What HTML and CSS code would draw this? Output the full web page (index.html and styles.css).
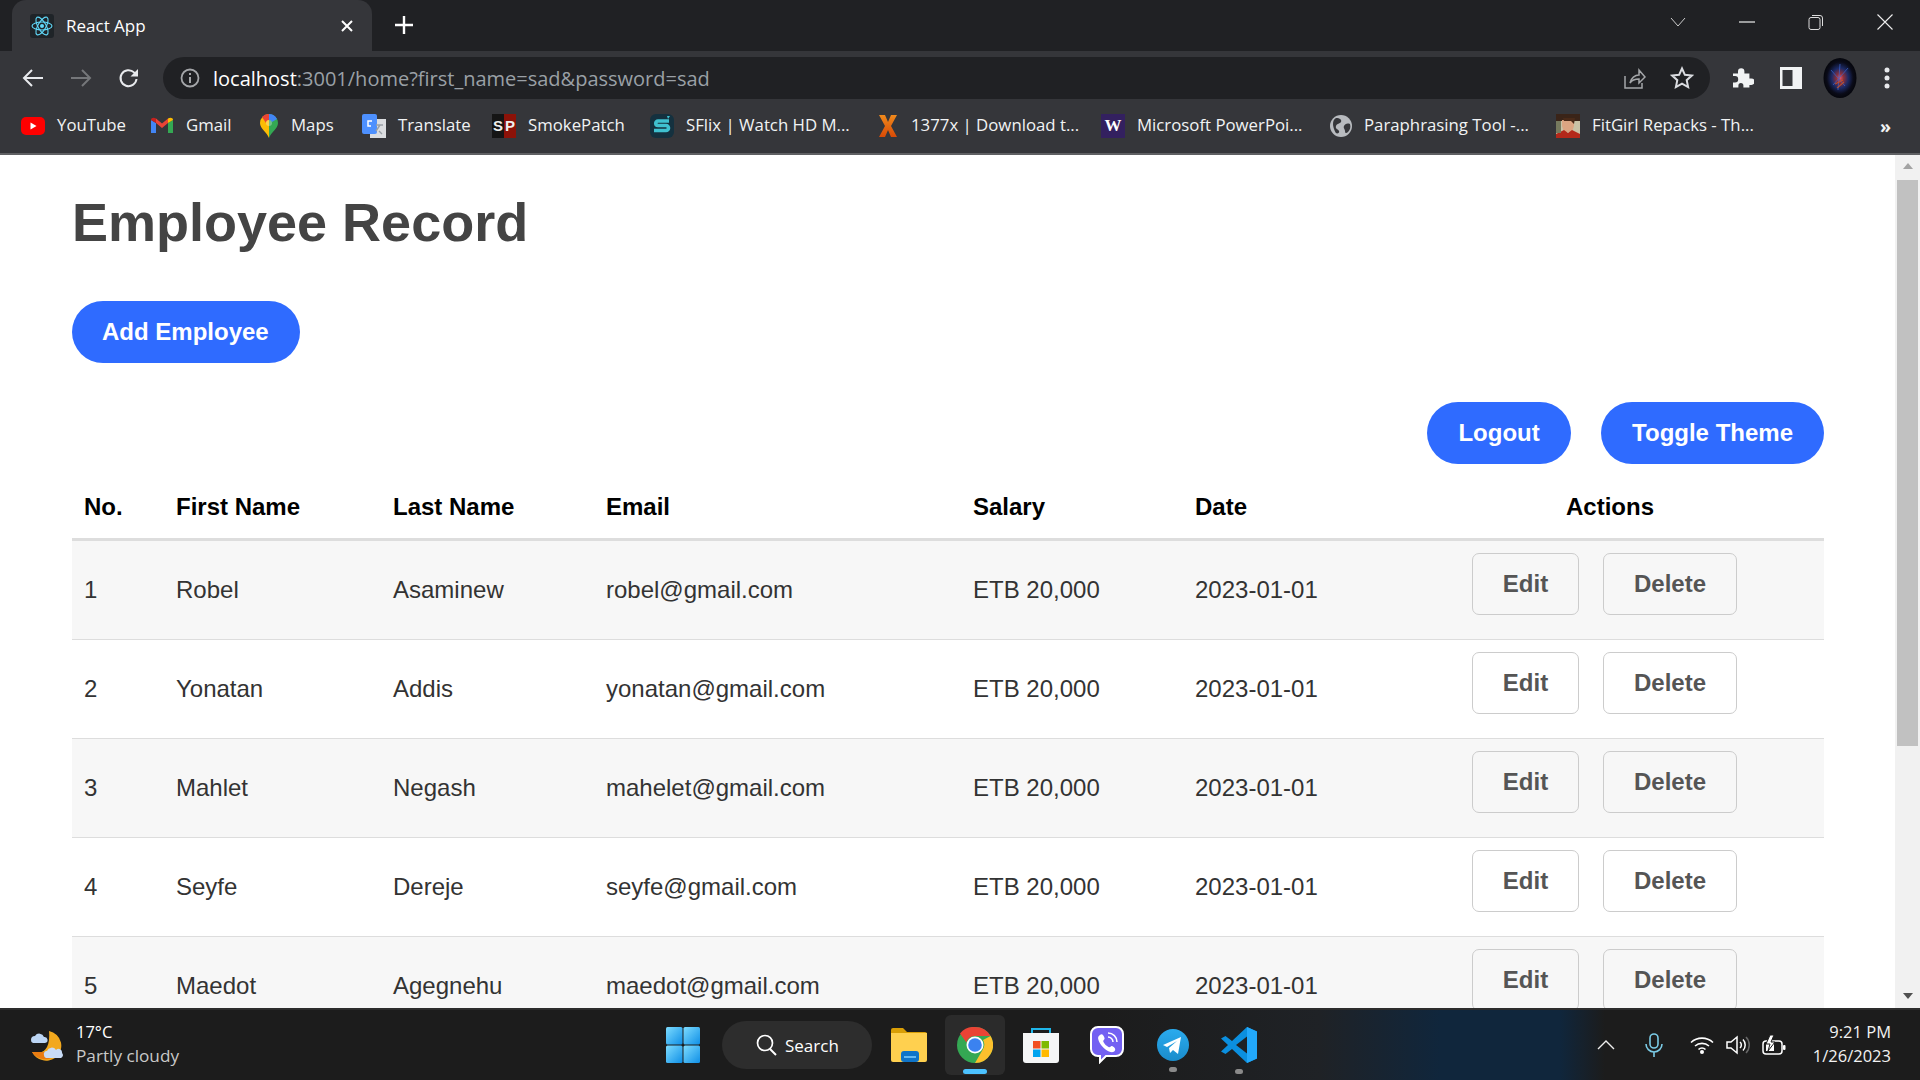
FILE: index.html
```html
<!DOCTYPE html>
<html lang="en">
<head>
<meta charset="utf-8">
<title>React App</title>
<link rel="stylesheet" href="styles.css">
</head>
<body>
<div class="browser">
  <header class="tabstrip">
    <div class="tab">
      <span class="favicon">
        <svg viewBox="0 0 24 24" width="24" height="24"><g fill="none" stroke="#61dafb" stroke-width="1.1"><ellipse cx="12" cy="12" rx="10" ry="4"/><ellipse cx="12" cy="12" rx="10" ry="4" transform="rotate(60 12 12)"/><ellipse cx="12" cy="12" rx="10" ry="4" transform="rotate(120 12 12)"/></g><circle cx="12" cy="12" r="2" fill="#61dafb"/></svg>
      </span>
      <span class="tab-title">React App</span>
      <svg class="tab-close" viewBox="0 0 14 14" width="14" height="14"><path d="M2 2l10 10M12 2L2 12" stroke="#fff" stroke-width="2"/></svg>
    </div>
    <svg class="new-tab" viewBox="0 0 18 18" width="18" height="18"><path d="M9 0v18M0 9h18" stroke="#fff" stroke-width="2.4"/></svg>
    <div class="winctl">
      <svg viewBox="0 0 16 10" width="16" height="10"><path d="M1 1l7 8 7-8" fill="none" stroke="#ccc" stroke-width="1"/></svg>
      <svg viewBox="0 0 16 16" width="16" height="16"><path d="M0 8h16" stroke="#eee" stroke-width="1.2"/></svg>
      <svg viewBox="0 0 16 16" width="16" height="16"><path d="M4 1.5h8a2.5 2.5 0 0 1 2.5 2.5v8" fill="none" stroke="#ddd" stroke-width="1"/><rect x="1" y="3.5" width="11" height="12" rx="2" fill="none" stroke="#ddd" stroke-width="1"/></svg>
      <svg viewBox="0 0 16 16" width="16" height="16"><path d="M.5.5l15 15M15.5.5l-15 15" stroke="#eee" stroke-width="1.1"/></svg>
    </div>
  </header>

  <div class="toolbar">
    <div class="nav">
      <svg viewBox="0 0 22 20" width="22" height="20"><path d="M21 10H2M10 2l-8 8 8 8" fill="none" stroke="#e8eaed" stroke-width="2"/></svg>
      <svg viewBox="0 0 22 20" width="22" height="20"><path d="M1 10h19M12 2l8 8-8 8" fill="none" stroke="#75777a" stroke-width="2"/></svg>
      <svg viewBox="0 0 22 22" width="22" height="22"><path d="M18.5 12a8 8 0 1 1-2.4-6.6L19 8" fill="none" stroke="#e8eaed" stroke-width="2"/><path d="M20 2v7.5h-7.5z" fill="#e8eaed"/></svg>
    </div>
    <div class="omnibox">
      <svg viewBox="0 0 20 20" width="20" height="20"><circle cx="10" cy="10" r="8.5" fill="none" stroke="#a4a6a9" stroke-width="1.8"/><path d="M10 9v6M10 5v2" stroke="#a4a6a9" stroke-width="2"/></svg>
      <div class="url"><span class="host">localhost</span>:3001/home?first_name=sad&amp;password=sad</div>
      <svg class="omni-share" viewBox="0 0 24 22" width="24" height="22"><path d="M3 9v12h17v-5" fill="none" stroke="#a4a6a9" stroke-width="1.5"/><path d="M8 16c1-5 5-8 9-8V3l6 7-6 6v-4c-4 0-7 1-9 4z" fill="none" stroke="#a4a6a9" stroke-width="1.5"/></svg>
      <svg viewBox="0 0 24 24" width="24" height="24"><path d="M12 2.5l2.9 6.3 6.9.8-5.1 4.6 1.4 6.8-6.1-3.4-6.1 3.4 1.4-6.8-5.1-4.6 6.9-.8z" fill="none" stroke="#dadce0" stroke-width="2"/></svg>
    </div>
    <div class="tools">
      <svg viewBox="0 0 24 24" width="24" height="24"><path d="M3 9h5V7a3.2 3.2 0 0 1 6.4 0v2h5v5h2a3.2 3.2 0 0 1 0 6.400h-2V23h-6v-2a2.500 2.500 0 0 0-5 0v2H3v-5h2a3.200 3.200 0 0 0 0-6.400H3z" fill="#f1f3f4" transform="translate(0 -1.500)"/></svg>
      <svg viewBox="0 0 22 22" width="22" height="22"><rect width="22" height="22" fill="#f1f3f4"/><rect x="2.500" y="3" width="10" height="16" fill="#35363a"/></svg>
      <svg class="avatar" viewBox="0 0 34 40" width="34" height="40"><defs><radialGradient id="ava" cx="50%" cy="50%" r="50%"><stop offset="0" stop-color="#e0566a"/><stop offset=".22" stop-color="#8c2f3a"/><stop offset=".5" stop-color="#1c2a66"/><stop offset=".8" stop-color="#0a0b18"/><stop offset="1" stop-color="#05060c"/></radialGradient></defs><ellipse cx="17" cy="20" rx="16.500" ry="20" fill="url(#ava)"/><path d="M8 12l14 16M25 10L10 27M17 6l-2 26" stroke="#3a62c8" stroke-width="1" opacity=".75"/><path d="M12 26l8-4M14 30l7-6" stroke="#c8552a" stroke-width="1.200" opacity=".8"/></svg>
      <svg class="kebab" viewBox="0 0 6 24" width="6" height="24"><circle cx="3" cy="4" r="2.500" fill="#e8eaed"/><circle cx="3" cy="12" r="2.500" fill="#e8eaed"/><circle cx="3" cy="20" r="2.500" fill="#e8eaed"/></svg>
    </div>
  </div>

  <nav class="bookmarks">
    <a class="bm"><svg viewBox="0 0 24 18" width="24" height="18"><rect width="24" height="18" rx="5" fill="#f00"/><path d="M9.500 5.500v7l6-3.500z" fill="#fff"/></svg><span>YouTube</span></a>
    <a class="bm bm-narrow"><svg viewBox="0 0 22 18" width="22" height="18"><path d="M0 16V3l5 3v10z" fill="#4285f4"/><path d="M22 16V3l-5 3v10z" fill="#34a853"/><path d="M5 6l6 5 6-5V1.500l-6 5-6-5z" fill="#ea4335"/><path d="M0 3l5 3V1.500C3 .2 0 .5 0 3z" fill="#c5221f"/><path d="M22 3l-5 3V1.500c2-1.300 5-1 5 1.500z" fill="#fbbc04"/></svg><span>Gmail</span></a>
    <a class="bm bm-narrow"><svg viewBox="0 0 18 24" width="18" height="24"><path d="M9 0a9 9 0 0 0-9 9c0 6 7 9 9 15z" fill="#fbbc04"/><path d="M9 0a9 9 0 0 1 9 9c0 6-7 9-9 15z" fill="#34a853"/><path d="M2 3a9 9 0 0 1 7-3v6a3 3 0 0 0-3 3z" fill="#ea4335"/><path d="M9 0a9 9 0 0 1 8 5l-5 3a3 3 0 0 0-3-2z" fill="#4285f4"/><circle cx="9" cy="9" r="3" fill="#fff" opacity=".3"/></svg><span>Maps</span></a>
    <a class="bm"><svg viewBox="0 0 24 24" width="24" height="24"><rect x="8" y="5" width="16" height="19" fill="#dbdde0"/><rect width="15" height="20" rx="2" fill="#4d90fe"/><path d="M18 11l-4 6M14 11h7M17 17l3 3" stroke="#9aa0a6" stroke-width="1.400" fill="none"/><path d="M10 7H6v5h3" fill="none" stroke="#fff" stroke-width="1.500"/></svg><span>Translate</span></a>
    <a class="bm"><span class="sp-icon"><b class="sp-s">S</b><b class="sp-p">P</b></span><span>SmokePatch</span></a>
    <a class="bm"><svg viewBox="0 0 24 24" width="24" height="24"><rect width="24" height="24" rx="6" fill="#14313f"/><path d="M19 7H8a2 2 0 0 0 0 4.500h8a2.500 2.500 0 0 1 0 5H4" fill="none" stroke="#3fc1d0" stroke-width="3.600"/><path d="M17 2l3 0-2 3z" fill="#3fc1d0"/></svg><span>SFlix | Watch HD M...</span></a>
    <a class="bm bm-x"><svg viewBox="0 0 18 22" width="18" height="22"><defs><linearGradient id="xg" x1="0" y1="0" x2="0" y2="1"><stop offset="0" stop-color="#f08a1c"/><stop offset="1" stop-color="#d84a06"/></linearGradient></defs><path d="M0 0h6l3 7 3-7h6l-6 11 6 11h-6l-3-7-3 7H0l6-11z" fill="url(#xg)"/></svg><span>1377x | Download t...</span></a>
    <a class="bm"><span class="w-icon">W</span><span>Microsoft PowerPoi...</span></a>
    <a class="bm"><svg viewBox="0 0 22 22" width="22" height="22"><circle cx="11" cy="11" r="11" fill="#b8bbbf"/><path d="M6 3c4 0 6 2 5 4s-4 1-5 4 2 3 3 5-2 3-3 2-3-6-3-9 1-5 3-6zM20 9c-3-1-5 0-6 2s1 3 1 5 1 3 3 1 3-5 2-8z" fill="#35363a"/></svg><span>Paraphrasing Tool -...</span></a>
    <a class="bm"><svg viewBox="0 0 24 24" width="24" height="24"><rect width="24" height="24" fill="#c9c2a6"/><path d="M0 0h24v7H0z" fill="#3a2418"/><path d="M6 6h12v6l-2 6h-8l-2-6z" fill="#dca582"/><path d="M7 4h12l-1 6-3-3H8z" fill="#4a2a18"/><path d="M0 24v-4l8-4 4 3 4-3 8 4v4z" fill="#b3281a"/><path d="M0 7h5v12H0z" fill="#767a5e"/></svg><span>FitGirl Repacks - Th...</span></a>
    <span class="bm-more">»</span>
  </nav>

  <div class="viewport">
    <main class="page">
      <h1 class="title">Employee Record</h1>
      <button class="pill add">Add Employee</button>
      <div class="top-actions">
        <button class="pill logout">Logout</button>
        <button class="pill">Toggle Theme</button>
      </div>
      <table class="records">
        <colgroup>
          <col class="c-no"><col class="c-first"><col class="c-last"><col class="c-email"><col class="c-salary"><col class="c-date"><col class="c-actions">
        </colgroup>
        <thead>
          <tr><th>No.</th><th>First Name</th><th>Last Name</th><th>Email</th><th>Salary</th><th>Date</th><th class="th-actions">Actions</th></tr>
        </thead>
        <tbody>
          <tr><td>1</td><td>Robel</td><td>Asaminew</td><td>robel@gmail.com</td><td>ETB 20,000</td><td>2023-01-01</td><td class="td-actions"><div class="row-btns"><button class="ghost edit">Edit</button><button class="ghost del">Delete</button></div></td></tr>
          <tr><td>2</td><td>Yonatan</td><td>Addis</td><td>yonatan@gmail.com</td><td>ETB 20,000</td><td>2023-01-01</td><td class="td-actions"><div class="row-btns"><button class="ghost edit">Edit</button><button class="ghost del">Delete</button></div></td></tr>
          <tr><td>3</td><td>Mahlet</td><td>Negash</td><td>mahelet@gmail.com</td><td>ETB 20,000</td><td>2023-01-01</td><td class="td-actions"><div class="row-btns"><button class="ghost edit">Edit</button><button class="ghost del">Delete</button></div></td></tr>
          <tr><td>4</td><td>Seyfe</td><td>Dereje</td><td>seyfe@gmail.com</td><td>ETB 20,000</td><td>2023-01-01</td><td class="td-actions"><div class="row-btns"><button class="ghost edit">Edit</button><button class="ghost del">Delete</button></div></td></tr>
          <tr><td>5</td><td>Maedot</td><td>Agegnehu</td><td>maedot@gmail.com</td><td>ETB 20,000</td><td>2023-01-01</td><td class="td-actions"><div class="row-btns"><button class="ghost edit">Edit</button><button class="ghost del">Delete</button></div></td></tr>
        </tbody>
      </table>
    </main>
    <div class="scrollbar">
      <svg viewBox="0 0 10 6" width="10" height="6"><path d="M5 0l5 6H0z" fill="#a3a3a3"/></svg>
      <div class="track"><div class="thumb"></div></div>
      <svg viewBox="0 0 10 6" width="10" height="6"><path d="M5 6l5-6H0z" fill="#505050"/></svg>
    </div>
  </div>

  <footer class="taskbar">
    <div class="weather">
      <svg viewBox="0 0 36 34" width="36" height="34"><path d="M20 3a15 15 0 0 1 6 27A16 16 0 0 1 3 24c8 3 19 0 17-21z" fill="#f2a81d"/><path d="M3 24c5 8 15 9 21 5l-6-5z" fill="#e97c12"/><path d="M2 12a4 4 0 0 1 4-4 5 5 0 0 1 9 1 3 3 0 0 1 1 6H4a3 3 0 0 1-2-3z" fill="#bcd5f4"/><path d="M15 27a3 3 0 0 1 3-4 5 5 0 0 1 9-1 3.500 3.500 0 0 1 6 3 3 3 0 0 1-1 5H17a3 3 0 0 1-2-3z" fill="#c9dcf6"/></svg>
      <div class="two-lines"><div class="t1">17°C</div><div class="t2">Partly cloudy</div></div>
    </div>
    <div class="task-center">
      <svg class="win" viewBox="0 0 34 36" width="34" height="36"><defs><linearGradient id="wg" x1="0" y1="0" x2="1" y2="1"><stop offset="0" stop-color="#7ddcff"/><stop offset="1" stop-color="#0f8fe6"/></linearGradient></defs><rect width="16.500" height="17.500" rx="1.500" fill="url(#wg)"/><rect x="17.500" width="16.500" height="17.500" rx="1.500" fill="url(#wg)"/><rect y="18.500" width="16.500" height="17.500" rx="1.500" fill="url(#wg)"/><rect x="17.500" y="18.500" width="16.500" height="17.500" rx="1.500" fill="url(#wg)"/></svg>
      <div class="search">
        <svg viewBox="0 0 21 22" width="21" height="22"><circle cx="9" cy="9" r="7.500" fill="none" stroke="#fff" stroke-width="1.700"/><path d="M14 15l6 6" stroke="#fff" stroke-width="1.900"/></svg>
        <span>Search</span>
      </div>
      <svg class="files" viewBox="0 0 36 34" width="36" height="34"><path d="M0 2a2 2 0 0 1 2-2h10l4 4h18a2 2 0 0 1 2 2v4H0z" fill="#d99e06"/><path d="M0 5h36v27a2 2 0 0 1-2 2H2a2 2 0 0 1-2-2z" fill="#ffd04f"/><rect x="10" y="23" width="18" height="11" rx="3" fill="#0f74c8"/><rect x="13" y="28" width="12" height="2" fill="#65b8f0"/></svg>
      <div class="task-tile">
        <svg viewBox="0 0 36 36" width="36" height="36"><circle cx="18" cy="18" r="18" fill="#34a853"/><path d="M18 0a18 18 0 0 1 15.600 9H18a9 9 0 0 0-8.600 6.500L3 6.500A18 18 0 0 1 18 0z" fill="#ea4335"/><path d="M33.600 9A18 18 0 0 1 18 36l7.800-13.500A9 9 0 0 0 26 13z" fill="#fbc02d"/><circle cx="18" cy="18" r="8.500" fill="#fff"/><circle cx="18" cy="18" r="6.800" fill="#3b82f0"/></svg>
        <i class="tile-active"></i>
      </div>
      <svg class="store" viewBox="0 0 36 36" width="36" height="36"><path d="M9 7V2h18v5" fill="none" stroke="#1fb6ea" stroke-width="2"/><path d="M0 6h36v27a3 3 0 0 1-3 3H3a3 3 0 0 1-3-3z" fill="#f4f5f6"/><rect x="10" y="14" width="7.500" height="7.500" fill="#f25022"/><rect x="18.500" y="14" width="7.500" height="7.500" fill="#7fba00"/><rect x="10" y="22.500" width="7.500" height="7.500" fill="#00a4ef"/><rect x="18.500" y="22.500" width="7.500" height="7.500" fill="#ffb900"/></svg>
      <svg class="viber" viewBox="0 0 34 38" width="34" height="38"><path d="M8 1h18a7 7 0 0 1 7 7v15a7 7 0 0 1-7 7H16l-6 6v-6H8a7 7 0 0 1-7-7V8a7 7 0 0 1 7-7z" fill="#7360f2" stroke="#fff" stroke-width="2"/><path d="M10 9c2-2 4 1 4.500 3s-2 2-1 4 3 4 5 5 2-1.500 3.500-1 4 2.500 3 4.500-3.500 2-6 1-8-5-10-10 0-5.500 1-6.500z" fill="#fff"/><path d="M18 7a9 9 0 0 1 9 9M18 11a5 5 0 0 1 5 5" fill="none" stroke="#fff" stroke-width="1.500"/></svg>
      <div class="pin">
        <svg viewBox="0 0 32 32" width="32" height="32"><defs><linearGradient id="tg" x1="0" y1="0" x2="0" y2="1"><stop offset="0" stop-color="#2aabee"/><stop offset="1" stop-color="#1a8ccb"/></linearGradient></defs><circle cx="16" cy="16" r="16" fill="url(#tg)"/><path d="M6 16l18-8-3 17-5-4-3 3-1-5 8-7-10 6z" fill="#fff"/></svg>
        <i class="pin-dot"></i>
      </div>
      <div class="pin pin-code">
        <svg viewBox="0 0 36 36" width="36" height="36"><path d="M26 0l10 4.500v27L26 36 11 22l-6.500 5L0 24.500 7 18 0 11.500 4.500 9 11 14z" fill="#0b8fdf"/><path d="M26 0l10 4.500v27L26 36z" fill="#22a8fa"/><path d="M26 9.500v17L15 18z" fill="#1e2124"/></svg>
        <i class="pin-dot"></i>
      </div>
    </div>
    <div class="tray">
      <svg viewBox="0 0 18 10" width="18" height="10"><path d="M1 9l8-8 8 8" fill="none" stroke="#eee" stroke-width="1.400"/></svg>
      <svg class="mic" viewBox="0 0 18 24" width="18" height="24"><rect x="5" y="1" width="8" height="14" rx="4" fill="none" stroke="#7bcbe6" stroke-width="1.600"/><path d="M1 11a8 8 0 0 0 16 0M9 19v5" fill="none" stroke="#7bcbe6" stroke-width="1.600"/></svg>
      <svg class="wifi" viewBox="0 0 24 18" width="24" height="18"><path d="M1 6.500a16 16 0 0 1 22 0M5 10a10.500 10.500 0 0 1 14 0M8.500 13.500a5 5 0 0 1 7 0" fill="none" stroke="#fff" stroke-width="1.600"/><circle cx="12" cy="16" r="2" fill="#fff"/></svg>
      <svg class="vol" viewBox="0 0 24 20" width="24" height="20"><path d="M1 7h4l6-5v16l-6-5H1z" fill="none" stroke="#fff" stroke-width="1.500"/><path d="M14 7a4 4 0 0 1 0 6M17 4.500a8 8 0 0 1 0 11" fill="none" stroke="#fff" stroke-width="1.500"/><path d="M20 2a11.500 11.500 0 0 1 0 16" fill="none" stroke="#666" stroke-width="1.500"/></svg>
      <svg class="batt" viewBox="0 0 24 21" width="24" height="21"><rect x="1" y="6" width="19" height="13" rx="3" fill="none" stroke="#fff" stroke-width="1.500"/><rect x="21" y="10" width="2.500" height="5" rx="1" fill="#fff"/><rect x="4" y="9" width="8" height="7" fill="#fff"/><path d="M8 0L4 9h4l-2 7 7-9H9l3-7z" fill="#fff" stroke="#1c1c1c" stroke-width="1"/></svg>
      <div class="two-lines clock"><div>9:21 PM</div><div>1/26/2023</div></div>
    </div>
  </footer>
</div>
</body>
</html>
```
FILE: styles.css
```css
* { box-sizing: border-box; }
html, body { margin: 0; height: 100%; overflow: hidden; }
body { font-family: "Liberation Sans", Arial, sans-serif; background: #fff; }
svg { display: block; flex: none; }
.browser { width: 1920px; height: 1080px; display: flex; flex-direction: column; overflow: hidden; }

/* tab strip */
.tabstrip { height: 51px; flex: none; background: #202124; display: flex; align-items: stretch; padding-left: 12px; }
.tab { width: 360px; background: #35363a; border-radius: 14px 14px 0 0; display: flex; align-items: center; padding: 0 18px; color: #fff; }
.favicon { width: 24px; height: 24px; background: #1f2428; border-radius: 3px; flex: none; }
.tab-title { font: 400 17px "Open Sans", sans-serif; margin-left: 12px; flex: 1; }
.new-tab { margin: 16px 0 0 23px; }
.winctl { margin-left: auto; display: flex; align-items: center; gap: 53px; padding-right: 27px; padding-bottom: 8px; }

/* toolbar */
.toolbar { height: 48px; flex: none; background: #35363a; display: flex; align-items: flex-start; padding-top: 6px; }
.nav { width: 163px; height: 42px; display: flex; align-items: center; gap: 26px; padding-left: 22px; flex: none; }
.omnibox { width: 1547px; height: 42px; background: #202124; border-radius: 21px; display: flex; align-items: center; padding: 0 16px 0 17px; gap: 13px; flex: none; }
.url { flex: 1; font: 400 20px "Open Sans", sans-serif; color: #9aa0a6; white-space: nowrap; }
.host { color: #fff; }
.omni-share { margin-right: 11px; }
.tools { flex: 1; display: flex; align-items: center; height: 42px; padding-left: 20px; gap: 25px; }
.tools svg:nth-child(2) { margin-left: 1px; }
.avatar { margin-left: -4px; }
.kebab { margin-left: 2px; }

/* bookmarks */
.bookmarks { height: 54px; flex: none; background: #35363a; display: grid; grid-template-columns: 130px 109px 102px 130px 158px 229px 222px 229px 226px 324px 1fr; align-items: center; padding-left: 21px; }
.bm { display: flex; align-items: center; gap: 12px; color: #f1f3f4; font: 400 16.800px/22px "Open Sans", sans-serif; white-space: nowrap; }
.bm > span:last-child { position: relative; top: -1.500px; }
.bm-narrow { gap: 13px; }
.bm-x { gap: 14px; }
.sp-icon { width: 24px; height: 24px; display: flex; font: 700 15px/24px "Liberation Sans", sans-serif; flex: none; }
.sp-s { width: 12px; background: #151515; color: #eee; text-align: center; }
.sp-p { width: 12px; background: #8c1208; color: #eee; text-align: center; }
.w-icon { width: 24px; height: 24px; background: #33205f; color: #fff; font: 700 17px/24px "Liberation Serif", serif; text-align: center; flex: none; }
.bm-more { color: #f1f3f4; font: 700 18px "Open Sans", sans-serif; }

/* page */
.viewport { flex: 1; min-height: 0; display: flex; border-top: 2px solid #5f6063; background: #fff; overflow: hidden; }
.page { flex: 1; min-width: 0; padding: 36px 71px 0 72px; overflow: hidden; }
.title { margin: 0 0 48px; font-size: 54px; line-height: 62px; font-weight: 700; color: #444; }
.pill { display: block; height: 62px; border: 0; border-radius: 31px; background: #2f6bff; color: #fff; font: 700 24px "Liberation Sans", sans-serif; padding: 0 31px; }
.add { padding: 0 31px 0 30px; }
.logout { width: 144px; padding: 0; }
.top-actions { display: flex; justify-content: flex-end; gap: 30px; margin-top: 39px; }
.records { width: 100%; margin-top: 12px; border-collapse: collapse; table-layout: fixed; font-size: 24px; color: #333; }
.c-no { width: 92px; } .c-first { width: 217px; } .c-last { width: 213px; } .c-email { width: 367px; } .c-salary { width: 222px; } .c-date { width: 213px; } .c-actions { width: 428px; }
.records th { height: 63px; padding: 0 12px; text-align: left; font-weight: 700; color: #000; border-bottom: 3px solid #ddd; }
.records th.th-actions { text-align: center; }
.records td { height: 99px; padding: 0 12px; border-bottom: 1px solid #ddd; }
.records tbody tr:first-child td { height: 100px; }
.records tbody tr:nth-child(odd) { background: #f7f7f7; }
.records td.td-actions { vertical-align: top; padding: 12px 0 0 76px; }
.row-btns { display: flex; gap: 24px; }
.ghost { height: 62px; background: transparent; border: 1px solid #ccc; border-radius: 7px; color: #555; font: 700 24px "Liberation Sans", sans-serif; padding: 0; }
.edit { width: 107px; } .del { width: 134px; }

/* scrollbar */
.scrollbar { width: 25px; flex: none; background: #f1f1f1; display: flex; flex-direction: column; align-items: center; padding: 8px 0 9px; }
.track { flex: 1; width: 100%; padding: 11px 2px 0; }
.thumb { height: 566px; background: #c1c1c1; }

/* taskbar */
.taskbar { height: 72px; flex: none; display: flex; align-items: center; border-top: 2px solid #2d2d2d; background: linear-gradient(90deg, #1c1c1c 0, #1c1c1c 1100px, #1f2226 1320px, #10263c 1440px, #10263c 1560px, #1c1c1c 1605px, #1c1c1c 100%); color: #fff; }
.weather { width: 666px; flex: none; display: flex; align-items: center; gap: 11px; padding-left: 29px; }
.two-lines { font: 400 16.500px/24px "Open Sans", sans-serif; position: relative; top: -1px; }
.t2 { color: #c9c9c9; font-size: 17.200px; }
.task-center { display: flex; align-items: center; flex: none; width: 600px; }
.search { width: 150px; height: 48px; border-radius: 24px; background: #2d2d2d; display: flex; align-items: center; gap: 8px; padding-left: 34px; margin-left: 22px; font: 400 17px "Open Sans", sans-serif; flex: none; }
.files { margin-left: 19px; }
.task-tile { width: 60px; height: 60px; background: #2b2b2b; border-radius: 6px; margin-left: 18px; display: flex; justify-content: center; padding-top: 12px; position: relative; flex: none; }
.tile-active { position: absolute; left: 18px; bottom: 1px; width: 24px; height: 5px; border-radius: 3px; background: #4cc2ff; }
.store { margin-left: 18px; }
.viber { margin-left: 31px; }
.pin { position: relative; margin-left: 33px; flex: none; }
.pin-code { margin-left: 32px; }
.pin-dot { position: absolute; left: 50%; bottom: -11px; margin-left: -4px; width: 8px; height: 5px; border-radius: 3px; background: #8a8a8a; }
.tray { flex: 1; display: flex; align-items: center; padding-left: 331px; }
.mic { margin-left: 30px; }
.wifi { margin-left: 27px; }
.vol { margin-left: 12px; }
.batt { margin-left: 12px; }
.clock { margin-left: auto; margin-right: 29px; text-align: right; color: #f2f2f2; }
```
